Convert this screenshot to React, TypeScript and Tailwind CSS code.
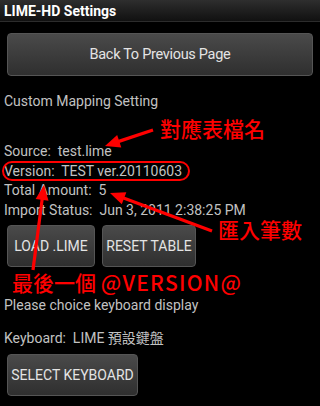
import React from "react";

const font = { fontFamily: 'Roboto, "Noto Sans CJK TC", sans-serif' };
const redFont = { fontFamily: '"Noto Sans CJK TC", sans-serif' };

function Arrow({ x1, y1, x2, y2 }: { x1: number; y1: number; x2: number; y2: number }) {
  // head geometry along the line direction
  const dx = x2 - x1;
  const dy = y2 - y1;
  const len = Math.hypot(dx, dy);
  const ux = dx / len;
  const uy = dy / len;
  const hl = 15;
  const hw = 6.5;
  const bx = x2 - ux * hl;
  const by = y2 - uy * hl;
  const pts = `${x2},${y2} ${bx - uy * hw},${by + ux * hw} ${bx + uy * hw},${by - ux * hw}`;
  return (
    <g>
      <line x1={x1} y1={y1} x2={bx + ux * 2} y2={by + uy * 2} stroke="#ff0000" strokeWidth={3.2} />
      <polygon points={pts} fill="#ff0000" />
    </g>
  );
}

function DroidButton({ children, className }: { children: React.ReactNode; className?: string }) {
  return (
    <div
      className={
        "flex items-center justify-center whitespace-nowrap rounded-[4px] border border-[#555] bg-gradient-to-b from-[#4a4a4a] to-[#2f2f2f] text-[#e4e4e4] " +
        (className ?? "")
      }
    >
      {children}
    </div>
  );
}

export default function App() {
  return (
    <div className="relative w-[320px] h-[406px] overflow-hidden bg-black" style={font}>
      <div className="h-[22px] border-b border-[#2c2c2c] bg-gradient-to-b from-[#2e2e2e] to-[#111] flex items-center px-[4px]">
        <span className="text-[14px] font-bold text-white leading-none">LIME-HD Settings</span>
      </div>

      <div className="px-[7px]">
        <DroidButton className="mt-[11px] h-[43px] text-[14.5px] tracking-[-0.3px]">Back To Previous Page</DroidButton>
      </div>

      <div className="px-[4px] text-[#c2c2c2] text-[14px]">
        <div className="mt-[15px] h-[20px] leading-[20px]">Custom Mapping Setting</div>
        <div className="mt-[31px] leading-[19.5px]">
          <div>Source:&nbsp; test.lime</div>
          <div>Version:&nbsp; TEST ver.20110603</div>
          <div>Total Amount:&nbsp; 5</div>
          <div>Import Status:&nbsp; Jun 3, 2011 2:38:25 PM</div>
        </div>
      </div>

      <div className="px-[7px] mt-[5px] flex gap-[7px]">
        <DroidButton className="w-[88px] h-[42px] text-[14px]">LOAD .LIME</DroidButton>
        <DroidButton className="w-[94px] h-[42px] text-[14px]">RESET TABLE</DroidButton>
      </div>

      <div className="px-[4px] text-[#c2c2c2] text-[14px]">
        <div className="mt-[28px] h-[20px] leading-[20px]">Please choice keyboard display</div>
        <div className="mt-[13px] h-[20px] leading-[20px]">Keyboard:&nbsp; LIME 預設鍵盤</div>
      </div>

      <div className="px-[7px] mt-[6px]">
        <DroidButton className="w-[131px] h-[42px] text-[14px]">SELECT KEYBOARD</DroidButton>
      </div>

      {/* annotations */}
      <div className="absolute left-[2px] top-[161px] w-[188px] h-[20px] rounded-full border-2 border-[#ff0000]" />
      <svg className="absolute inset-0 pointer-events-none" width={320} height={406}>
        <Arrow x1={153} y1={130} x2={105} y2={146} />
        <Arrow x1={212} y1={231} x2={110} y2={193} />
        <Arrow x1={33} y1={270} x2={44} y2={185} />
      </svg>
      <div style={redFont} className="absolute left-[160px] top-[116px] text-[21px] font-medium leading-[24px] text-[#ff0000] whitespace-nowrap">對應表檔名</div>
      <div style={redFont} className="absolute left-[218px] top-[217px] text-[21px] font-medium leading-[24px] text-[#ff0000] whitespace-nowrap">匯入筆數</div>
      <div style={redFont} className="absolute left-[12px] top-[270px] text-[21px] font-medium leading-[24px] text-[#ff0000] whitespace-nowrap">
        最後一個 <span className="tracking-[1.3px]">@VERSION@</span>
      </div>
    </div>
  );
}
